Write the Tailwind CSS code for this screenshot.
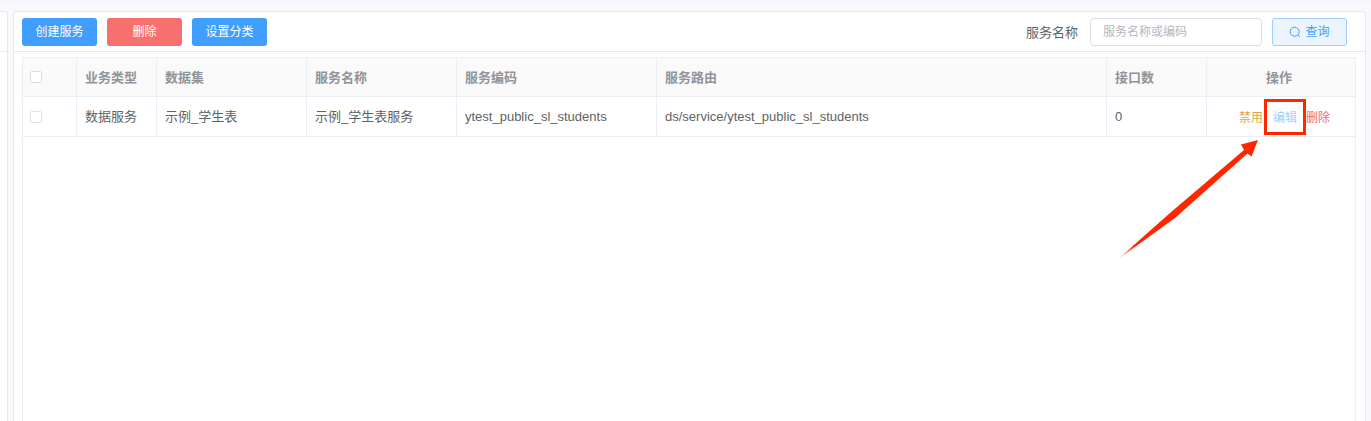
<!doctype html>
<html><head><meta charset="utf-8"><script src="https://cdn.jsdelivr.net/npm/@tailwindcss/browser@4"></script></head>
<body class="m-0 bg-white">
<div class="relative w-[1371px] h-[421px] overflow-hidden bg-[#f8f8fd] font-['Liberation_Sans','Noto_Sans_CJK_SC',sans-serif] text-[13px] leading-none">
<div class="h-[6px] bg-[#f4f7fb]"></div>
<div class="flex h-[415px] gap-[5px] pt-[5px]">
<div class="w-[8px] h-full bg-white border-r border-t border-[#e8e8f2] rounded-tr-[4px] flex flex-col"><div class="mt-[39px] border-b border-[#e8e8f2]"></div></div>
<div class="w-[1353px] h-full bg-white border border-b-0 border-[#e8e8f2] rounded-t-[4px] flex flex-col">
<div class="h-[40px] shrink-0 border-b border-[#e8e8f2] flex items-center pl-[8px] pr-[18px] pt-[1px]">
<button class="w-[75px] h-[28px] rounded-[3px] bg-[#409eff] text-white text-[12px]">创建服务</button>
<button class="w-[75px] h-[28px] rounded-[3px] bg-[#f76f6f] text-white text-[12px] ml-[10px]">删除</button>
<button class="w-[75px] h-[28px] rounded-[3px] bg-[#409eff] text-white text-[12px] ml-[10px]">设置分类</button>
<span class="ml-auto text-[#606266]">服务名称</span>
<div class="ml-[12px] w-[172px] h-[28px] border border-[#dcdfe6] rounded-[4px] flex items-center pl-[12px] text-[12px] text-[#b4b8c0]">服务名称或编码</div>
<button class="ml-[10px] w-[75px] h-[28px] border border-[#a0cfff] bg-[#ecf5ff] rounded-[3px] text-[#409eff] text-[12px] flex items-center justify-center gap-[4px]">
<svg class="w-[12px] h-[12px]" viewBox="0 0 12 12" fill="none" stroke="#409eff" stroke-width="1"><circle cx="5.7" cy="5.7" r="4.5"/><path d="M9 9l2 2"/></svg>查询</button>
</div>
<div class="ml-[8px] mr-[9px] mt-[5px] border-x border-[#ebeef5] flex-1 flex flex-col">
<div class="flex h-[40px] bg-[#fafafa] border-y border-[#ebeef5] font-bold text-[#909399] items-stretch">
<div class="w-[54px] border-r border-[#ebeef5] flex items-center pl-[7px]"><span class="w-[12px] h-[12px] border border-[#dcdfe6] rounded-[2px] bg-white"></span></div>
<div class="w-[80px] border-r border-[#ebeef5] flex items-center pl-[8px]">业务类型</div>
<div class="w-[150px] border-r border-[#ebeef5] flex items-center pl-[8px]">数据集</div>
<div class="w-[150px] border-r border-[#ebeef5] flex items-center pl-[8px]">服务名称</div>
<div class="w-[200px] border-r border-[#ebeef5] flex items-center pl-[8px]">服务编码</div>
<div class="w-[450px] border-r border-[#ebeef5] flex items-center pl-[8px]">服务路由</div>
<div class="w-[100px] border-r border-[#ebeef5] flex items-center pl-[8px]">接口数</div>
<div class="flex-1 flex items-center justify-center pr-[4px]">操作</div>
</div>
<div class="flex h-[40px] border-b border-[#ebeef5] text-[#606266] items-stretch">
<div class="w-[54px] border-r border-[#ebeef5] flex items-center pl-[7px]"><span class="w-[12px] h-[12px] border border-[#dcdfe6] rounded-[2px] bg-white"></span></div>
<div class="w-[80px] border-r border-[#ebeef5] flex items-center pl-[8px]">数据服务</div>
<div class="w-[150px] border-r border-[#ebeef5] flex items-center pl-[8px]">示例_学生表</div>
<div class="w-[150px] border-r border-[#ebeef5] flex items-center pl-[8px]">示例_学生表服务</div>
<div class="w-[200px] border-r border-[#ebeef5] flex items-center pl-[8px]">ytest_public_sl_students</div>
<div class="w-[450px] border-r border-[#ebeef5] flex items-center pl-[8px]">ds/service/ytest_public_sl_students</div>
<div class="w-[100px] border-r border-[#ebeef5] flex items-center pl-[8px]">0</div>
<div class="flex-1 flex items-center justify-end pr-[25px] text-[12px] pt-[2px]"><span class="text-[#e6a23c]">禁用</span><span class="text-[#a0cfff] ml-[10px]">编辑</span><span class="text-[#f8647c] ml-[9px]">删除</span></div>
</div>
</div>
</div>
</div>
<div class="absolute left-[1264px] top-[99px] w-[42px] h-[36px] border-[3px] border-[#ff2600]"></div>
<svg class="absolute left-0 top-0" width="1371" height="421" viewBox="0 0 1371 421"><defs><linearGradient id="a" x1="1117" y1="260" x2="1258" y2="140" gradientUnits="userSpaceOnUse"><stop offset="0" stop-color="#ff2600" stop-opacity="0"/><stop offset="0.12" stop-color="#ff2600"/></linearGradient></defs><path d="M1117 260L1170 213L1244 150L1241 144.500L1258 140L1251.500 156.500L1247.500 153.500L1175 218Z" fill="url(#a)"/></svg>
</div>
</body></html>
